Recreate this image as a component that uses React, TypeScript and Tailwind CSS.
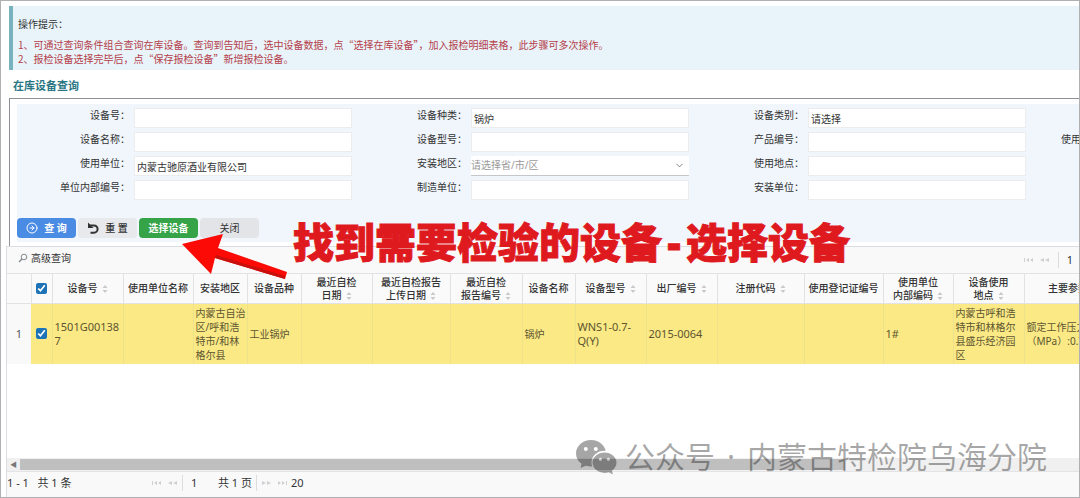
import { useId } from "react";
import { ChevronDown, CircleArrowRight } from "lucide-react";

type Field = {
  label: string;
  value?: string;
  kind?: "text" | "region";
};

const fields: (Field | null)[] = [
  { label: "设备号" },
  { label: "设备种类", value: "锅炉" },
  { label: "设备类别", value: "请选择" },
  null,
  { label: "设备名称" },
  { label: "设备型号" },
  { label: "产品编号" },
  { label: "使用登记证编号" },
  { label: "使用单位", value: "内蒙古驰原酒业有限公司" },
  { label: "安装地区", kind: "region" },
  { label: "使用地点" },
  null,
  { label: "单位内部编号" },
  { label: "制造单位" },
  { label: "安装单位" },
];

type Column = { width: string; lines: string[]; sortable?: boolean; cell?: string };

const columns: Column[] = [
  { width: "w-[71px]", lines: ["设备号"], sortable: true, cell: "1501G001387" },
  { width: "w-[70px]", lines: ["使用单位名称"] },
  { width: "w-[54px]", lines: ["安装地区"], cell: "内蒙古自治区/呼和浩特市/和林格尔县" },
  { width: "w-[54px]", lines: ["设备品种"], cell: "工业锅炉" },
  { width: "w-[71px]", lines: ["最近自检", "日期"], sortable: true },
  { width: "w-[78px]", lines: ["最近自检报告", "上传日期"], sortable: true },
  { width: "w-[72px]", lines: ["最近自检", "报告编号"], sortable: true },
  { width: "w-[53px]", lines: ["设备名称"], cell: "锅炉" },
  { width: "w-[71px]", lines: ["设备型号"], sortable: true, cell: "WNS1-0.7-Q(Y)" },
  { width: "w-[71px]", lines: ["出厂编号"], sortable: true, cell: "2015-0064" },
  { width: "w-[87px]", lines: ["注册代码"], sortable: true },
  { width: "w-[79px]", lines: ["使用登记证编号"] },
  { width: "w-[70px]", lines: ["使用单位", "内部编码"], sortable: true, cell: "1#" },
  { width: "w-[71px]", lines: ["设备使用", "地点"], sortable: true, cell: "内蒙古呼和浩特市和林格尔县盛乐经济园区" },
  { width: "w-[88px]", lines: ["主要参数"], cell: "额定工作压力（MPa）:0.7" },
];

function FormField({ field }: { field: Field }) {
  const id = useId();
  return (
    <div className="flex h-5 gap-1">
      <label htmlFor={id} className="w-[113px] shrink-0 whitespace-nowrap text-right leading-[14px]">
        {field.label}：
      </label>
      {field.kind === "region" ? (
        <div className="relative w-[218px] shrink-0">
          <select
            id={id}
            className="h-5 w-full appearance-none border-b border-[#c4c6ca] bg-white text-[#9a9a9a]"
          >
            <option>请选择省/市/区</option>
          </select>
          <ChevronDown size={11} className="pointer-events-none absolute right-1 top-1 text-[#777]" />
        </div>
      ) : (
        <input
          id={id}
          type="text"
          defaultValue={field.value}
          className="h-5 w-[218px] shrink-0 border border-[#ececee] bg-white px-[2px]"
        />
      )}
    </div>
  );
}

function SortMark() {
  return (
    <svg viewBox="0 0 6 8" className="ml-1 inline-block h-2 w-[6px]" fill="#c9c9cc" aria-hidden="true">
      <path d="M3 0 5.5 3h-5zM3 8 .5 5h5z" />
    </svg>
  );
}

function PageArrows({ flip = false }: { flip?: boolean }) {
  return (
    <svg viewBox="0 0 26 6" className={flip ? "h-[6px] w-[26px] rotate-180" : "h-[6px] w-[26px]"} fill="#d0d0d3" aria-hidden="true">
      <path d="M0 1h1v4H0zM2 3l3-2v4zM6 3l3-2v4zM16 3l4-2v4zM21 3l4-2v4z" />
    </svg>
  );
}

function ResetIcon() {
  return (
    <svg viewBox="0 0 12 12" className="size-3" fill="none" stroke="#333" strokeWidth="2" aria-hidden="true">
      <path d="M2.500 3.500H7a3.600 3.600 0 0 1 0 7.200H3.500" />
      <path d="M1 0.500v5.500h5.500z" fill="#333" stroke="none" />
    </svg>
  );
}

function SearchIcon() {
  return (
    <svg viewBox="0 0 10 10" className="size-[10px]" fill="none" stroke="#85898f" aria-hidden="true">
      <circle cx="6" cy="4" r="2.800" />
      <path d="M4 6 1 9" strokeWidth="1.500" />
    </svg>
  );
}

function Arrow() {
  return (
    <svg viewBox="0 0 106 46" className="absolute left-[165px] top-[14px] h-[46px] w-[106px]" aria-hidden="true">
      <path d="M0 11 41 1 36 15 105 39 103 46 33 25 29 41z" fill="#fb0a06" />
      <path d="M34 22 103 43 103 46 33 25z" fill="#c8100c" />
    </svg>
  );
}

function Watermark() {
  const maskId = useId();
  return (
    <div className="pointer-events-none absolute bottom-[17px] right-8 flex items-center gap-2 text-[30px] leading-[46px] text-black/35">
      <svg viewBox="0 0 41 35" className="h-[35px] w-[41px]" fill="currentColor" aria-hidden="true">
        <mask id={maskId}>
          <rect width="41" height="35" fill="#fff" />
          <ellipse cx="28.500" cy="22.500" rx="13" ry="11.700" fill="#000" />
          <circle cx="9.800" cy="9" r="2" fill="#000" />
          <circle cx="19.800" cy="9" r="2" fill="#000" />
        </mask>
        <path
          mask={`url(#${maskId})`}
          d="M15 0C6.700 0 0 6 0 13.500c0 4.200 2.100 7.800 5.500 10.200L4.500 28l5.300-2.200c1.600.5 3.400.8 5.200.8 8.300 0 15-5.700 15-13.100S23.300 0 15 0z"
        />
        <path
          fillRule="evenodd"
          d="M28.500 12.400c-6.600 0-12 4.500-12 10.200s5.400 10.300 12 10.300c1.500 0 2.900-.2 4.200-.6l4.300 2.200-1.100-3.800c2.800-1.900 4.600-4.800 4.600-8.100 0-5.700-5.400-10.200-12-10.200zm-4.100 5.300a1.600 1.600 0 1 1 0 3.200 1.600 1.600 0 0 1 0-3.200zm8 0a1.600 1.600 0 1 1 0 3.200 1.600 1.600 0 0 1 0-3.200z"
        />
      </svg>
      <p className="flex">
        <span>公众号</span>
        <span className="w-8 text-center">·</span>
        <span>内蒙古特检院乌海分院</span>
      </p>
    </div>
  );
}

export default function App() {
  return (
    <main className="relative flex min-h-screen flex-col overflow-hidden border border-[#b0b0b2] bg-white pl-[5px] font-['Noto_Sans','Noto_Sans_CJK_SC',sans-serif] text-[10px] text-[#333]">
      <section className="ml-[3px] mt-[5px] border-l-4 border-[#78b2be] bg-[#e8f4fa] pb-1 pl-[5px] pt-[11px] font-['Noto_Sans_CJK_SC',sans-serif] leading-[14px]">
        <h2>操作提示：</h2>
        <ol className="mt-[7px] text-[#b5404a]">
          <li>1、可通过查询条件组合查询在库设备。查询到告知后，选中设备数据，点“选择在库设备”，加入报检明细表格，此步骤可多次操作。</li>
          <li>2、报检设备选择完毕后，点“保存报检设备”新增报检设备。</li>
        </ol>
      </section>

      <h1 className="ml-[7px] mt-2 text-[11px] font-bold leading-4 text-[#2a7684]">在库设备查询</h1>

      <form
        className="ml-[3px] mt-1 border-l border-t border-[#8d9095] pb-1 pl-[7px] pt-[5px]"
        onSubmit={(event) => event.preventDefault()}
      >
        <div className="relative bg-[#f1f6fd] pb-1 pt-1">
          <div className="grid w-max grid-cols-[repeat(4,335px)] gap-x-[2px] gap-y-1">
            {fields.map((field, index) =>
              field ? <FormField key={field.label} field={field} /> : <span key={index} />,
            )}
          </div>
          <div className="mt-[18px] flex h-5 gap-[2px]">
            <button type="submit" className="flex w-[59px] items-center justify-center gap-[6px] rounded bg-[#4a8be4] font-bold text-white">
              <CircleArrowRight size={12} />
              <span className="whitespace-pre">查 询</span>
            </button>
            <button type="reset" className="flex w-[59px] items-center justify-center gap-[6px] rounded bg-[#e8e9ec] font-medium">
              <ResetIcon />
              <span className="whitespace-pre">重 置</span>
            </button>
            <button type="button" className="w-[59px] rounded bg-[#35a348] font-bold text-white">
              选择设备
            </button>
            <button type="button" className="w-[59px] rounded bg-[#e3e4e8]">
              关闭
            </button>
          </div>
          <div className="pointer-events-none absolute bottom-0 left-0">
            <p className="absolute bottom-[-24px] left-[276px] flex whitespace-nowrap text-[41px] font-black leading-[48px] text-[#df1a1f] [-webkit-text-stroke:1px_#df1a1f]">
              <span>找到需要检验的设备</span>
              <span className="w-6 text-center">-</span>
              <span>选择设备</span>
            </p>
            <div className="absolute bottom-[23px] left-0">
              <Arrow />
            </div>
          </div>
        </div>
      </form>

      <section className="flex grow flex-col border-l border-t border-[#dcdde0]">
        <div className="flex h-[26px] items-center justify-between bg-[#f9f9fa] pl-[11px] pr-[6px]">
          <button type="button" className="flex items-center gap-[3px] pb-1">
            <SearchIcon />
            高级查询
          </button>
          <div className="flex items-center gap-2">
            <PageArrows />
            <span className="border-l border-[#dcdde0] pl-2 text-[11px] leading-4">1</span>
          </div>
        </div>

        <div className="overflow-hidden">
          <table className="w-[1105px] table-fixed border-collapse">
            <thead>
              <tr className="h-[30px] bg-[#fafafb]">
                <th className="w-6 border-b border-t border-[#e2e2e5]" />
                <th className="w-[21px] border border-[#e2e2e5] p-0">
                  <input type="checkbox" defaultChecked aria-label="全选" className="mx-auto block size-[11px] accent-[#1c73b8]" />
                </th>
                {columns.map((column, index) => (
                  <th
                    key={index}
                    className={`${column.width} whitespace-nowrap border border-[#e2e2e5] p-0 font-medium leading-[13px]`}
                  >
                    {column.lines.map((line, i) => (
                      <span key={line} className="block">
                        {line}
                        {column.sortable && i === column.lines.length - 1 && <SortMark />}
                      </span>
                    ))}
                  </th>
                ))}
              </tr>
            </thead>
            <tbody>
              <tr className="h-[60px] bg-[#fae985] text-[#5d5530]">
                <td className="bg-[#f9f9fa] text-center text-[11px] text-[#555]">1</td>
                <td className="p-0">
                  <input type="checkbox" defaultChecked aria-label="选择第1行" className="mx-auto block size-[11px] accent-[#1c73b8]" />
                </td>
                {columns.map((column, index) => (
                  <td
                    key={index}
                    className={`break-words border-x border-[#efe08a] py-0 pl-[2px] pr-0 leading-[14px] ${
                      /^[\x20-\x7e]+$/.test(column.cell ?? "") ? "text-[11px]" : "text-[10px]"
                    }`}
                  >
                    {column.cell}
                  </td>
                ))}
              </tr>
            </tbody>
          </table>
        </div>

        <div className="min-h-10 grow" />

        <div className="flex h-[13px] items-center bg-[#f0f0f1]">
          <span className="w-[13px] text-center text-[7px] leading-none text-[#777]">◀</span>
          <div className="h-[11px] w-[77%] bg-[#bfbfbf]" />
        </div>
        <footer className="flex h-[26px] items-center whitespace-pre border-t border-[#e4e4e6] bg-[#f9f9fa] pb-1 text-[11px] leading-4">
          <span className="w-[145px]">1 - 1   共 1 条</span>
          <PageArrows />
          <span className="ml-1 w-9 border-l border-[#dcdde0] pl-2">1</span>
          <span className="mr-1 border-r border-[#dcdde0] pr-1">共 1 页</span>
          <PageArrows flip />
          <span className="ml-1">20</span>
        </footer>
      </section>

      <Watermark />
    </main>
  );
}
